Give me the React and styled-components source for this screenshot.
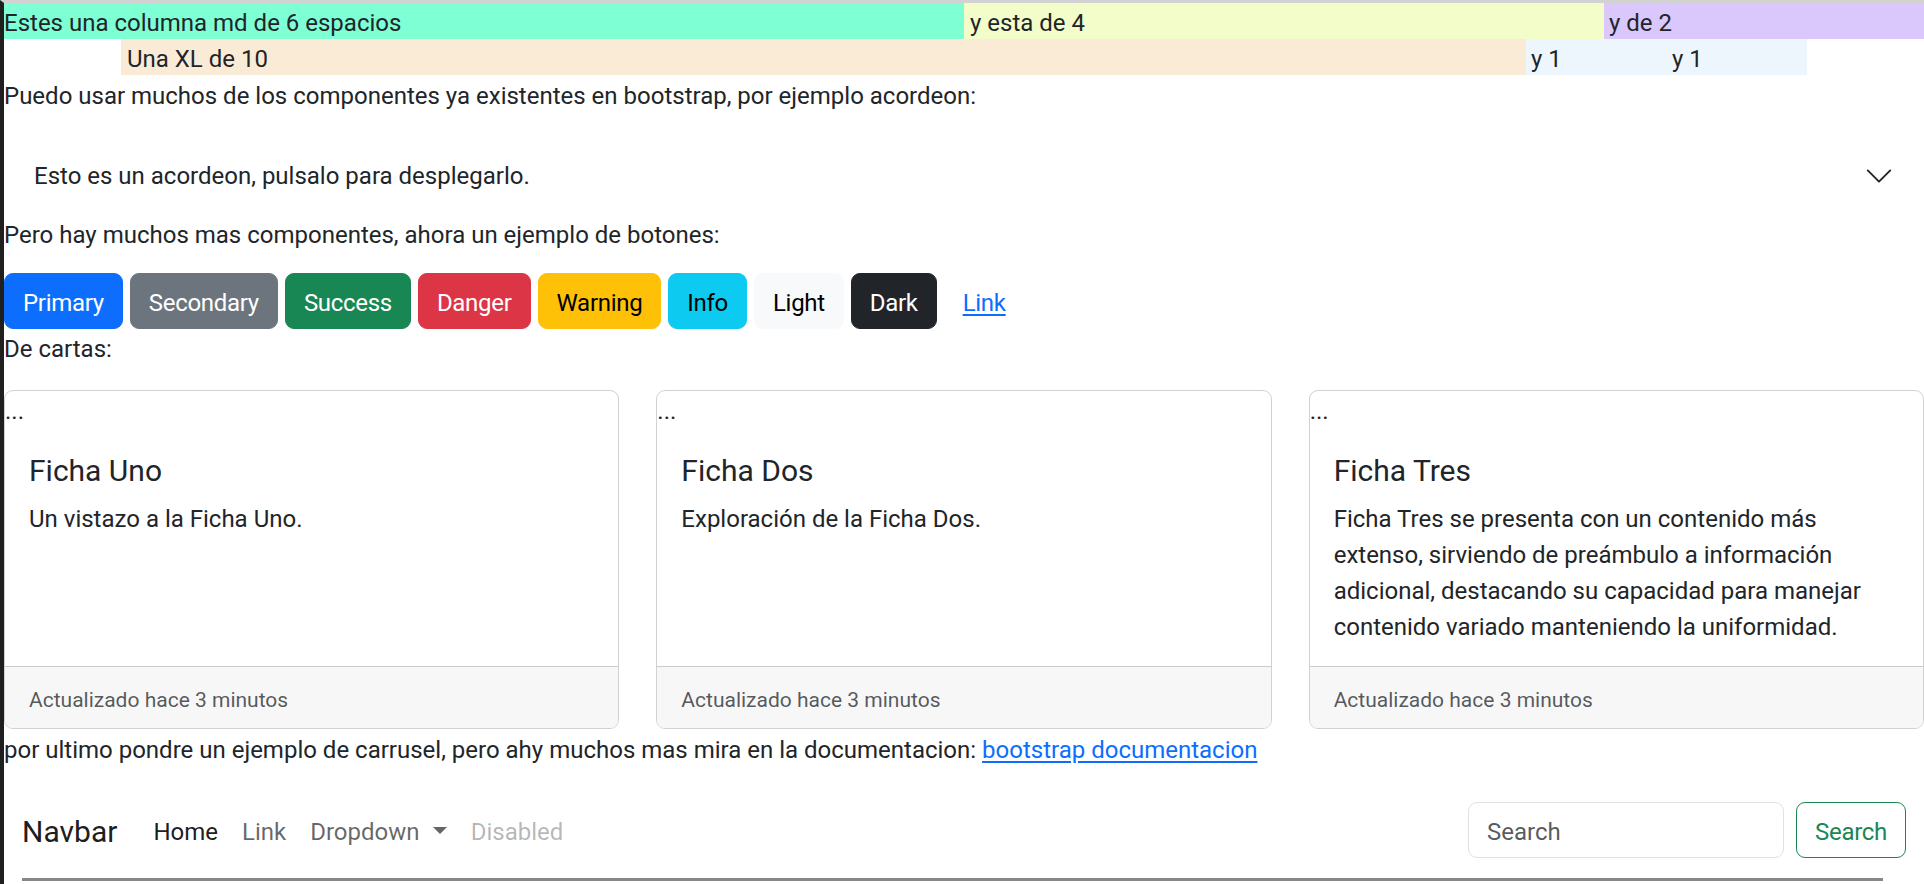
import React from 'react'
import styled, { createGlobalStyle } from 'styled-components'

const GlobalStyle = createGlobalStyle`
    html, body {
        margin: 0;
        padding: 0;
        background: #fff;
    }
    body {
        font-family: Roboto, "Noto Sans", sans-serif;
        font-size: 24px;
        line-height: 1.5;
        color: #212529;
    }
    * { box-sizing: border-box; }
`

// padding-top 2px on text lines nudges Roboto's baseline down to where Segoe UI sat
const Frame = styled.div`
    min-height: 100vh;
    border-top: 3px solid #d2d2d2;
    border-left: 4px solid #1f1f1f;
    overflow: hidden;
`
const GridRow = styled.div`
    display: grid;
    grid-template-columns: ${props => props.cols};
    margin-left: ${props => props.offset || 0}px;
`
const Cell = styled.div`
    height: 36px;
    padding-top: 2px;
    padding-left: ${props => props.pad}px;
    background-color: ${props => props.bg};
    line-height: 36px;
    white-space: nowrap;
`
const Text = styled.p`
    margin: ${props => props.mt || 0}px 0 ${props => props.mb || 0}px;
    padding-top: 2px;
    line-height: 36px;
`
const Accordion = styled.div``
const AccordionButton = styled.button`
    display: flex;
    align-items: center;
    width: 100%;
    padding: 25px 30px 21px;
    border: none;
    background: #fff;
    font: inherit;
    color: #212529;
    text-align: left;
    line-height: 36px;
`
const Chevron = styled.svg`
    margin-left: auto;
    width: 30px;
    height: 30px;
    flex-shrink: 0;
`
const ButtonRow = styled.div`
    display: flex;
    gap: 7px;
`
const variants = {
    primary: ['#0d6efd', '#fff'],
    secondary: ['#6c757d', '#fff'],
    success: ['#198754', '#fff'],
    danger: ['#dc3545', '#fff'],
    warning: ['#ffc107', '#000'],
    info: ['#0dcaf0', '#000'],
    light: ['#f8f9fa', '#000'],
    dark: ['#212529', '#fff'],
    link: ['transparent', '#0d6efd'],
}
const Btn = styled.button`
    padding: 11px 18px 7px;
    border: 1px solid ${props => variants[props.variant][0]};
    border-radius: 9px;
    background-color: ${props => variants[props.variant][0]};
    color: ${props => variants[props.variant][1]};
    font: inherit;
    line-height: 36px;
    letter-spacing: -0.3px;
    text-decoration: ${props => props.variant === 'link' ? 'underline' : 'none'};
    text-underline-offset: 3px;
`
const Cards = styled.div`
    display: grid;
    grid-template-columns: repeat(3, 1fr);
    gap: 37px;
    margin: 23px 0 1px;
`
const Card = styled.div`
    display: flex;
    flex-direction: column;
    border: 1px solid rgba(0, 0, 0, 0.175);
    border-radius: 9px;
    overflow: hidden;
`
const ImgAlt = styled.div`
    height: 36px;
    padding-top: 2px;
    line-height: 36px;
`
const CardBody = styled.div`
    flex: 1;
    padding: 24px 24px 21px;
`
const CardTitle = styled.h5`
    margin: 0 0 10px;
    padding-top: 2px;
    font-size: 30px;
    font-weight: 400;
    line-height: 36px;
`
const CardText = styled.p`
    margin: 0;
    padding-top: 2px;
    line-height: 36px;
`
const CardFooter = styled.div`
    padding: 14px 24px 10px;
    border-top: 1px solid rgba(0, 0, 0, 0.175);
    background-color: #f7f7f7;
    line-height: 36px;
`
const Muted = styled.small`
    font-size: 21px;
    color: rgba(33, 37, 41, 0.75);
`
const A = styled.a`
    color: #0d6efd;
    text-decoration: underline;
    text-underline-offset: 3px;
`
const Navbar = styled.nav`
    display: flex;
    align-items: center;
    margin-top: 20px;
    padding: 12px 18px;
`
const Brand = styled.a`
    margin-right: 24px;
    padding-top: 2px;
    font-size: 30px;
    line-height: 43px;
    color: rgba(0, 0, 0, 0.9);
`
const NavList = styled.ul`
    display: flex;
    margin: 0;
    padding: 0;
    list-style: none;
`
const NavLink = styled.a`
    display: block;
    padding: 14px 12px 10px;
    color: ${props => props.tone === 'active' ? 'rgba(0, 0, 0, 0.9)' : props.tone === 'disabled' ? 'rgba(0, 0, 0, 0.3)' : 'rgba(0, 0, 0, 0.6)'};
    ${props => props.caret && `
        &::after {
            content: "";
            display: inline-block;
            margin-left: 0.55em;
            vertical-align: 0.255em;
            border-top: 0.3em solid;
            border-right: 0.3em solid transparent;
            border-left: 0.3em solid transparent;
        }
    `}
`
const SearchForm = styled.form`
    display: flex;
    margin-left: auto;
`
const SearchInput = styled.input`
    width: 316px;
    height: 56px;
    margin-right: 12px;
    padding: 11px 18px 7px;
    border: 1px solid #dee2e6;
    border-radius: 9px;
    font: inherit;
    color: #212529;
    &::placeholder { color: rgba(33, 37, 41, 0.75); }
`
const OutlineBtn = styled.button`
    padding: 11px 18px 7px;
    border: 1px solid #198754;
    border-radius: 9px;
    background: transparent;
    color: #198754;
    font: inherit;
    line-height: 36px;
    letter-spacing: -0.3px;
`
const Carousel = styled.div`
    height: 200px;
    margin: 6px 41px 0 18px;
    border-top: 3px solid #878787;
`

const cards = [
    { title: 'Ficha Uno', text: 'Un vistazo a la Ficha Uno.' },
    { title: 'Ficha Dos', text: 'Exploración de la Ficha Dos.' },
    { title: 'Ficha Tres', text: 'Ficha Tres se presenta con un contenido más extenso, sirviendo de preámbulo a información adicional, destacando su capacidad para manejar contenido variado manteniendo la uniformidad.' },
]
const buttons = ['Primary', 'Secondary', 'Success', 'Danger', 'Warning', 'Info', 'Light', 'Dark', 'Link']

const App = () => {
    return (
        <Frame>
            <GlobalStyle />
            <GridRow cols="6fr 4fr 2fr">
                <Cell bg="#7fffd4" pad={0}>Estes una columna md de 6 espacios</Cell>
                <Cell bg="#f3fdc9" pad={6}>y esta de 4</Cell>
                <Cell bg="#dac8fc" pad={5}>y de 2</Cell>
            </GridRow>
            <GridRow cols="1405px 141px 140px" offset={117}>
                <Cell bg="#faebd7" pad={6}>Una XL de 10</Cell>
                <Cell bg="#eef6fd" pad={5}>y 1</Cell>
                <Cell bg="#eef6fd" pad={5}>y 1</Cell>
            </GridRow>
            <Text mt={1} mb={19}>Puedo usar muchos de los componentes ya existentes en bootstrap, por ejemplo acordeon:</Text>
            <Accordion>
                <AccordionButton type="button">
                    Esto es un acordeon, pulsalo para desplegarlo.
                    <Chevron viewBox="0 0 16 16" fill="none" stroke="#212529" strokeLinecap="round" strokeLinejoin="round">
                        <path d="M2 5L8 11L14 5" />
                    </Chevron>
                </AccordionButton>
            </Accordion>
            <Text mb={20}>Pero hay muchos mas componentes, ahora un ejemplo de botones:</Text>
            <ButtonRow>
                {buttons.map(b => (
                    <Btn key={b} type="button" variant={b.toLowerCase()}>{b}</Btn>
                ))}
            </ButtonRow>
            <Text>De cartas:</Text>
            <Cards>
                {cards.map(card => (
                    <Card key={card.title}>
                        <ImgAlt>...</ImgAlt>
                        <CardBody>
                            <CardTitle>{card.title}</CardTitle>
                            <CardText>{card.text}</CardText>
                        </CardBody>
                        <CardFooter>
                            <Muted>Actualizado hace 3 minutos</Muted>
                        </CardFooter>
                    </Card>
                ))}
            </Cards>
            <Text>por ultimo pondre un ejemplo de carrusel, pero ahy muchos mas mira en la documentacion: <A href="#">bootstrap documentacion</A></Text>
            <Navbar>
                <Brand>Navbar</Brand>
                <NavList>
                    <li><NavLink tone="active">Home</NavLink></li>
                    <li><NavLink>Link</NavLink></li>
                    <li><NavLink caret>Dropdown</NavLink></li>
                    <li><NavLink tone="disabled">Disabled</NavLink></li>
                </NavList>
                <SearchForm onSubmit={e => e.preventDefault()}>
                    <SearchInput type="search" placeholder="Search" />
                    <OutlineBtn type="submit">Search</OutlineBtn>
                </SearchForm>
            </Navbar>
            <Carousel />
        </Frame>
    )
}

export default App
